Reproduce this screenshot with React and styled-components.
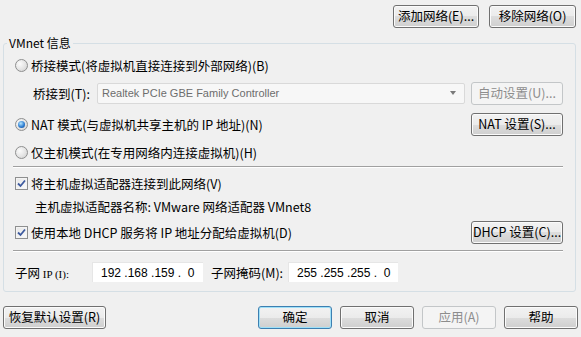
import React from 'react';
import styled, { createGlobalStyle, css } from 'styled-components';

const GlobalStyle = createGlobalStyle`
  html, body { margin: 0; padding: 0; background: #f0f0f0; }
  body {
    font-family: "Noto Sans CJK SC", "Liberation Sans", sans-serif;
    font-size: 12.5px;
    color: #000;
  }
`;

const Window = styled.div`
  width: 581px;
  height: 337px;
  background: #f0f0f0;
  display: flex;
  flex-direction: column;
  overflow: hidden;
`;

const TopBar = styled.div`
  display: flex;
  justify-content: flex-end;
  gap: 10px;
  padding: 5px 5px 0 0;
`;

const Button = styled.button`
  box-sizing: border-box;
  width: ${p => p.$w || 74}px;
  height: 23px;
  flex-shrink: 0;
  padding: 0;
  font: inherit;
  font-size: 12.5px;
  line-height: 1;
  color: #000;
  border: 1px solid #707070;
  border-radius: 3px;
  background: linear-gradient(#f2f2f2 0%, #ebebeb 50%, #dddddd 50%, #cfcfcf 100%);
  box-shadow: inset 0 0 0 1px #fbfbfb;
  ${p => p.$default && css`
    border-color: #3c7fb1;
    box-shadow: inset 0 0 0 1px #9fe0f8;
  `}
  ${p => p.disabled && css`
    border-color: #c3c6c8;
    background: #f4f4f4;
    box-shadow: none;
    color: #8d8d8d;
  `}
`;

const Group = styled.fieldset`
  margin: 8px 5px 0 3px;
  padding: 0;
  min-width: 0;
  border: 1px solid #d5dfe5;
  border-radius: 3px;
`;

const Legend = styled.legend`
  margin-left: 3px;
  padding: 0 2px;
  line-height: 14px;
  font-size: 12px;
`;

const Body = styled.div`
  display: flex;
  flex-direction: column;
  padding: 0 12px 4px 11px;
`;

const Row = styled.div`
  display: flex;
  align-items: center;
  height: ${p => p.$h}px;
  padding-left: ${p => p.$indent || 0}px;
  gap: ${p => p.$gap || 0}px;
`;

const Spacer = styled.div`
  flex: 1;
`;

const Option = styled.label`
  display: flex;
  align-items: center;
  gap: 3px;
  white-space: nowrap;
`;

const Radio = styled.span`
  box-sizing: border-box;
  width: 13px;
  height: 13px;
  flex-shrink: 0;
  border-radius: 50%;
  border: 1px solid #8e8f8f;
  background: radial-gradient(circle at 35% 35%, #fbfbfb 0, #e4e4e4 55%, #cdcdcd 100%);
  display: flex;
  align-items: center;
  justify-content: center;
  &::after {
    content: '';
    display: ${p => (p.$on ? 'block' : 'none')};
    width: 7px;
    height: 7px;
    border-radius: 50%;
    background: radial-gradient(circle at 40% 35%, #b5e6ff 0, #2f7fd2 55%, #0d3f8c 100%);
  }
`;

const Box = styled.span`
  box-sizing: border-box;
  width: 13px;
  height: 13px;
  flex-shrink: 0;
  border: 1px solid #8e8f8f;
  background: linear-gradient(135deg, #e6e6e6, #fbfbfb);
  box-shadow: inset 0 0 0 1px #f4f4f4;
  display: flex;
  align-items: center;
  justify-content: center;
`;

const Separator = styled.div`
  height: 0;
  margin: ${p => p.$mt}px 0 ${p => p.$mb}px -2px;
  border-top: 1px solid #a0a0a0;
  border-bottom: 1px solid #fff;
`;

const FieldLabel = styled.span`
  width: ${p => p.$w}px;
  flex-shrink: 0;
  margin-left: ${p => p.$ml || 0}px;
  white-space: nowrap;
`;

const Combo = styled.div`
  box-sizing: border-box;
  width: 368px;
  height: 21px;
  display: flex;
  align-items: center;
  padding: 0 8px 0 4px;
  border: 1px solid #d9d9d9;
  border-radius: 2px;
  background: #f7f7f7;
  color: #6d6d6d;
  font-family: "Liberation Sans", sans-serif;
  font-size: 11px;
`;

const Arrow = styled.span`
  margin-left: auto;
  width: 0;
  height: 0;
  border-left: 3.5px solid transparent;
  border-right: 3.5px solid transparent;
  border-top: 4px solid #7a7a7a;
`;

const Note = styled.span`
  white-space: nowrap;
`;

const IpField = styled.div`
  box-sizing: border-box;
  width: ${p => p.$w}px;
  height: 20px;
  display: flex;
  align-items: center;
  padding-left: 8px;
  background: #fff;
  border-top: 1px solid #e6e6e6;
  border-left: 1px solid #e6e6e6;
  font-family: "Liberation Sans", sans-serif;
  font-size: 12px;
  white-space: pre;
`;

const Latin = styled.span`
  font-family: "Liberation Serif", serif;
  font-size: 11px;
`;

const BottomBar = styled.div`
  display: flex;
  align-items: center;
  gap: 8px;
  padding: 14px 3px 0 3px;
`;

const Check = () => (
  <svg width="9" height="9" viewBox="0 0 9 9">
    <path d="M1 4.5 L3.5 7 L8 1.5" fill="none" stroke="#3d5a9e" strokeWidth="1.8" />
  </svg>
);

export default function App() {
  return (
    <Window>
      <GlobalStyle />
      <TopBar>
        <Button $w={86}>添加网络(E)...</Button>
        <Button $w={87}>移除网络(O)</Button>
      </TopBar>

      <Group>
        <Legend>VMnet 信息</Legend>
        <Body>
          <Row $h={30}>
            <Option><Radio />桥接模式(将虚拟机直接连接到外部网络)(B)</Option>
          </Row>
          <Row $h={26} $indent={18}>
            <FieldLabel $w={64}>桥接到(T):</FieldLabel>
            <Combo>Realtek PCIe GBE Family Controller<Arrow /></Combo>
            <Spacer />
            <Button $w={92} disabled>自动设置(U)...</Button>
          </Row>
          <Row $h={36}>
            <Option><Radio $on />NAT 模式(与虚拟机共享主机的 IP 地址)(N)</Option>
            <Spacer />
            <Button $w={92}>NAT 设置(S)...</Button>
          </Row>
          <Row $h={20}>
            <Option><Radio />仅主机模式(在专用网络内连接虚拟机)(H)</Option>
          </Row>
          <Separator $mt={4} $mb={3} />
          <Row $h={24}>
            <Option><Box><Check /></Box>将主机虚拟适配器连接到此网络(V)</Option>
          </Row>
          <Row $h={22} $indent={20}>
            <Note>主机虚拟适配器名称: VMware 网络适配器 VMnet8</Note>
          </Row>
          <Row $h={30}>
            <Option><Box><Check /></Box>使用本地 DHCP 服务将 IP 地址分配给虚拟机(D)</Option>
            <Spacer />
            <Button $w={92}>DHCP 设置(C)...</Button>
          </Row>
          <Separator $mt={3} $mb={5} />
          <Row $h={30}>
            <FieldLabel $w={77}>子网 <Latin>IP (I):</Latin></FieldLabel>
            <IpField $w={111}>{'192 .168 .159 .  0'}</IpField>
            <FieldLabel $w={77} $ml={8}>子网掩码(M):</FieldLabel>
            <IpField $w={110}>{'255 .255 .255 .  0'}</IpField>
          </Row>
        </Body>
      </Group>

      <BottomBar>
        <Button $w={103}>恢复默认设置(R)</Button>
        <Spacer />
        <Button $default>确定</Button>
        <Button>取消</Button>
        <Button disabled>应用(A)</Button>
        <Button>帮助</Button>
      </BottomBar>
    </Window>
  );
}
